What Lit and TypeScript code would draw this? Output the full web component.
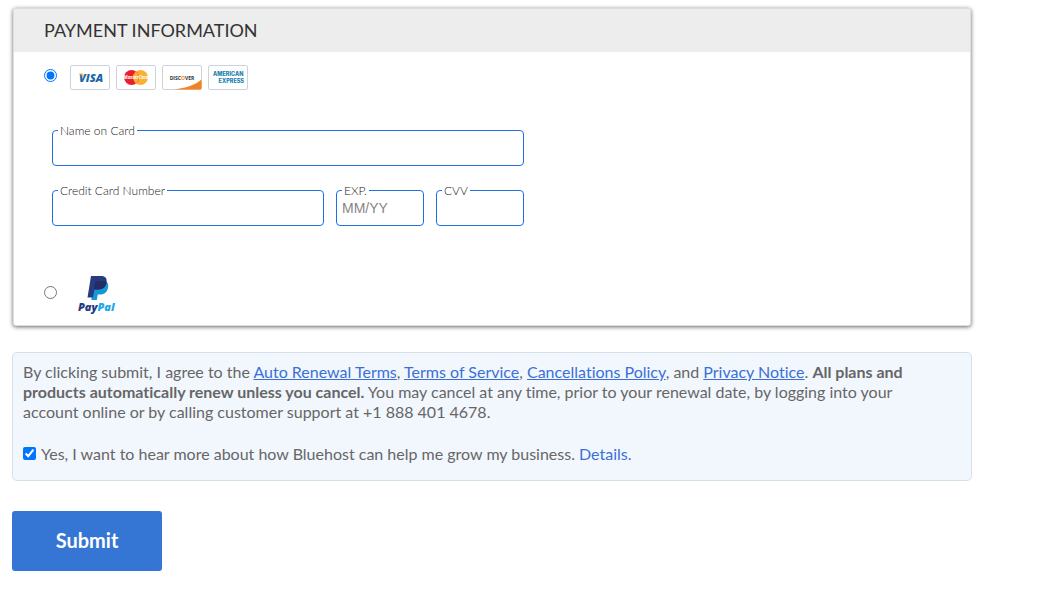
import { LitElement, html, css, svg } from "lit";
import { customElement, property } from "lit/decorators.js";

@customElement("card-field")
class CardField extends LitElement {
  @property() label = "";
  @property() placeholder = "";

  static styles = css`
    :host {
      display: block;
      position: relative;
    }
    .caption {
      position: absolute;
      left: 6px;
      top: -8px;
      padding: 0 2px;
      background: #fff;
      color: #222;
      font: 300 12px/18px Lato, sans-serif;
      white-space: nowrap;
    }
    .control {
      display: block;
      box-sizing: border-box;
      width: 100%;
      height: 36px;
      padding: 0 5px;
      border: 1px solid #1f6fde;
      border-radius: 4px;
      background: #fff;
      color: #333;
      font: 400 14px/20px "Liberation Sans", sans-serif;
      outline: none;
    }
    .control::placeholder {
      color: #858585;
      opacity: 1;
    }
  `;

  render() {
    return html`
      <input class="control" id="control" type="text" placeholder=${this.placeholder} />
      <label class="caption" for="control">${this.label}</label>
    `;
  }
}

const visa = svg`
  <text x="9" y="16.500" font-family="Open Sans, sans-serif" font-size="11" font-weight="800" font-style="italic" fill="#1a67a8">VISA</text>
  <path d="M9 8.500h3.400l1.200 4.600C12.600 11 11 9.500 9 9z" fill="#f2ae2b" />`;

const mastercard = svg`
  <circle cx="15.500" cy="12.500" r="7.500" fill="#e8202e" />
  <circle cx="24.500" cy="12.500" r="7.500" fill="#fbb033" />
  <path d="M20 6.500a7.500 7.500 0 0 1 0 12" fill="none" stroke="#f0812f" />
  <text x="20" y="14" text-anchor="middle" font-family="Open Sans, sans-serif" font-size="4.500" font-weight="700" font-style="italic" fill="#fff">MasterCard</text>`;

const discover = svg`
  <path d="M12 24.500C24 23 33 20 39.500 14.500V23a1.500 1.500 0 0 1-1.500 1.500z" fill="#f58220" />
  <text x="20" y="15" text-anchor="middle" font-family="Open Sans, sans-serif" font-size="5" font-weight="700" fill="#26333d">DISC<tspan fill="#f58220">O</tspan>VER</text>`;

const amex = svg`
  <text x="5" y="11" font-family="Inter, sans-serif" font-size="5.500" font-weight="800" fill="#1a7fae">AMERICAN</text>
  <text x="36" y="18" text-anchor="end" font-family="Inter, sans-serif" font-size="5.500" font-weight="800" fill="#1a7fae">EXPRESS</text>`;

@customElement("app-root")
class AppRoot extends LitElement {
  static styles = css`
    :host {
      display: block;
      background: #fff;
      color: #666;
      font: 16px/20px Lato, sans-serif;
      font-variant-ligatures: none;
    }
    .page {
      max-width: 960px;
      padding: 8px 12px;
    }
    .panel {
      margin: 0 1px;
      border: 1px solid #ddd;
      border-radius: 3px;
      background: #fff;
      box-shadow: 0 1px 4px rgba(0, 0, 0, 0.6);
    }
    .title {
      margin: 0;
      padding: 10px 30px;
      background: #ededed;
      color: #333;
      font: 400 18px/23px Lato, sans-serif;
    }
    .methods {
      padding: 13px 30px 11px;
    }
    .method {
      display: flex;
      align-items: center;
    }
    .pick {
      width: 13px;
      height: 13px;
      margin: 0 13px 4px 0;
    }
    .brands {
      display: flex;
      gap: 6px;
    }
    .brand {
      display: block;
      width: 40px;
      height: 25px;
    }
    .fields {
      display: grid;
      grid-template-columns: 272px 88px 88px;
      gap: 24px 12px;
      width: fit-content;
      padding: 40px 8px 48px;
    }
    .wide {
      grid-column: 1 / -1;
    }
    .paypal {
      display: block;
      width: 40px;
      height: 40px;
      margin-left: 8px;
    }
    .terms {
      margin-top: 26px;
      padding: 9px 50px 16px 10px;
      border: 1px solid #d5e1e8;
      border-radius: 5px;
      background: #f2f7fe;
    }
    .text {
      margin: 0 0 22px;
    }
    .link {
      color: #3a6fd8;
    }
    .plain {
      text-decoration: none;
    }
    .optin {
      display: flex;
      align-items: center;
      gap: 5px;
    }
    .tick {
      width: 13px;
      height: 13px;
      margin: 0 0 2px;
    }
    .submit {
      display: block;
      width: 150px;
      height: 60px;
      margin-top: 30px;
      padding: 0 0 2px;
      border: 0;
      border-radius: 3px;
      background: #3575d3;
      color: #fff;
      font: 700 20px/24px Lato, sans-serif;
    }
  `;

  private brand(name: string, art: unknown) {
    return html`<svg class="brand" viewBox="0 0 40 25" role="img" aria-label=${name}>
      <rect x="0.500" y="0.500" width="39" height="24" rx="1.500" fill="#fff" stroke="#cdd3dc" />
      ${art}
    </svg>`;
  }

  render() {
    return html`
      <form class="page" @submit=${(e: Event) => e.preventDefault()}>
        <section class="panel">
          <h2 class="title">PAYMENT INFORMATION</h2>
          <div class="methods">
            <div class="method">
              <input class="pick" type="radio" name="method" id="card" checked />
              <label class="brands" for="card">
                ${this.brand("Visa", visa)} ${this.brand("MasterCard", mastercard)}
                ${this.brand("Discover", discover)} ${this.brand("American Express", amex)}
              </label>
            </div>
            <div class="fields">
              <card-field class="wide" label="Name on Card"></card-field>
              <card-field label="Credit Card Number"></card-field>
              <card-field label="EXP." placeholder="MM/YY"></card-field>
              <card-field label="CVV"></card-field>
            </div>
            <div class="method">
              <input class="pick" type="radio" name="method" id="paypal" />
              <label for="paypal">
                <svg class="paypal" viewBox="0 0 40 40" role="img" aria-label="PayPal">
                  <path d="M16.500 7h8.500c4.500 0 6 3 5 7-1 4.500-4 6.500-8 6.500h-2.200L18.800 26h-5.500z" fill="#139ad6" />
                  <path d="M13 2h10c4.500 0 6.300 2.500 5.500 6.500-1 5-4.200 7-8.500 7h-3.500L15 23.500H9.500z" fill="#263b80" />
                  <path d="M17.500 7h7.500c1.300 0 2.500.2 3.500.8v.7c-1 5-4.200 7-8.500 7h-4z" fill="#232c65" />
                  <text x="0" y="37" font-family="Open Sans, sans-serif" font-size="11" font-weight="800" font-style="italic" fill="#263b80">Pay<tspan fill="#1fa8e6">Pal</tspan></text>
                </svg>
              </label>
            </div>
          </div>
        </section>
        <section class="terms">
          <p class="text">
            By clicking submit, I agree to the <a class="link" href="#">Auto Renewal Terms</a>,
            <a class="link" href="#">Terms of Service</a>,
            <a class="link" href="#">Cancellations Policy</a>, and
            <a class="link" href="#">Privacy Notice</a>.
            <strong>All plans and products automatically renew unless you cancel.</strong>
            You may cancel at any time, prior to your renewal date, by logging into your account
            online or by calling customer support at +1 888 401 4678.
          </p>
          <div class="optin">
            <input class="tick" type="checkbox" id="optin" checked />
            <div>
              <label for="optin">Yes, I want to hear more about how Bluehost can help me grow my business.</label>
              <a class="link plain" href="#">Details.</a>
            </div>
          </div>
        </section>
        <button class="submit" type="submit">Submit</button>
      </form>
    `;
  }
}
